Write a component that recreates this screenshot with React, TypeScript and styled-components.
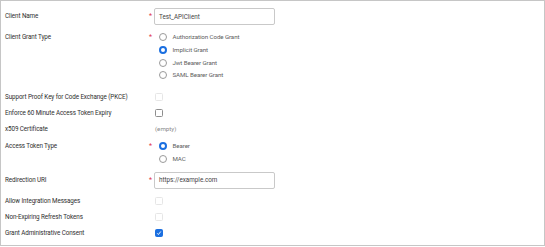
import React from 'react';
import styled, { createGlobalStyle } from 'styled-components';

const Global = createGlobalStyle`
  html, body { margin: 0; padding: 0; background: #fff; }
  body { font-family: Roboto, "Liberation Sans", Arial, sans-serif; }
`;

const Frame = styled.div`
  box-sizing: border-box;
  width: 545px;
  height: 246px;
  border: 1px solid #c6c6c6;
  background: #fff;
  padding: 7px 0 0 4px;
  display: flex;
  flex-direction: column;
`;

const Row = styled.div<{ $h: number; $mt?: number }>`
  display: grid;
  grid-template-columns: 144px 5px 1fr;
  align-items: start;
  min-height: ${p => p.$h}px;
  margin-top: ${p => p.$mt ?? 0}px;
`;

const Label = styled.div<{ $line: number }>`
  font-size: 6.3px;
  font-weight: 400;
  letter-spacing: -0.1px;
  color: #2e2e2e;
  line-height: ${p => p.$line}px;
  white-space: nowrap;
`;

const Req = styled.span<{ $line: number }>`
  color: #e0364b;
  font-size: 7px;
  line-height: ${p => p.$line}px;
  text-align: left;
`;

const TextInput = styled.div`
  box-sizing: border-box;
  width: 121px;
  height: 17px;
  border: 1px solid #c9c9c9;
  border-radius: 2px;
  padding-left: 4px;
  font-size: 6.3px;
  color: #444;
  display: flex;
  align-items: center;
`;

const RadioGroup = styled.div`
  display: flex;
  flex-direction: column;
  padding-left: 5px;
`;

const RadioRow = styled.div`
  display: flex;
  align-items: center;
  height: 12.7px;
  gap: 5.5px;
  font-size: 6.2px;
  letter-spacing: -0.1px;
  color: #5e5e5e;
`;

const Radio = styled.span<{ $on?: boolean }>`
  box-sizing: border-box;
  width: 8px;
  height: 8px;
  border-radius: 50%;
  border: ${p => (p.$on ? '2.3px solid #1b6fe0' : '1px solid #9a9a9a')};
  background: #fff;
  flex: none;
`;

const Box = styled.span<{ $kind: 'off' | 'disabled' | 'on' }>`
  box-sizing: border-box;
  width: 8px;
  height: 8px;
  margin: 4px 0 0 1px;
  border-radius: 1.5px;
  display: flex;
  align-items: center;
  justify-content: center;
  border: 1px solid
    ${p => (p.$kind === 'on' ? '#1b6fe0' : p.$kind === 'off' ? '#8e8e8e' : '#e6e6e6')};
  background: ${p => (p.$kind === 'on' ? '#1b6fe0' : '#fff')};
`;

const Empty = styled.div`
  font-size: 6.2px;
  color: #8a8a8a;
  line-height: 16px;
  padding-left: 1px;
`;

const Check = () => (
  <svg width="6" height="6" viewBox="0 0 10 10">
    <path d="M2 5.5 L4 7.5 L8 2.5" fill="none" stroke="#fff" strokeWidth="1.6" />
  </svg>
);

const CheckRow = ({ label, kind, mt }: { label: string; kind: 'off' | 'disabled' | 'on'; mt?: number }) => (
  <Row $h={16} $mt={mt}>
    <Label $line={16}>{label}</Label>
    <span />
    <div>
      <Box $kind={kind}>{kind === 'on' && <Check />}</Box>
    </div>
  </Row>
);

export default function App() {
  return (
    <>
      <Global />
      <Frame>
        <Row $h={17}>
          <Label $line={17}>Client Name</Label>
          <Req $line={17}>*</Req>
          <TextInput>Test_APIClient</TextInput>
        </Row>

        <Row $h={51} $mt={6}>
          <Label $line={12.7}>Client Grant Type</Label>
          <Req $line={12.7}>*</Req>
          <RadioGroup>
            <RadioRow><Radio />Authorization Code Grant</RadioRow>
            <RadioRow><Radio $on />Implicit Grant</RadioRow>
            <RadioRow><Radio />Jwt Bearer Grant</RadioRow>
            <RadioRow><Radio />SAML Bearer Grant</RadioRow>
          </RadioGroup>
        </Row>

        <CheckRow label="Support Proof Key for Code Exchange (PKCE)" kind="disabled" mt={7} />
        <CheckRow label="Enforce 60 Minute Access Token Expiry" kind="off" />

        <Row $h={16}>
          <Label $line={16}>x509 Certificate</Label>
          <span />
          <Empty>(empty)</Empty>
        </Row>

        <Row $h={25.4} $mt={3}>
          <Label $line={12.7}>Access Token Type</Label>
          <Req $line={12.7}>*</Req>
          <RadioGroup>
            <RadioRow><Radio $on />Bearer</RadioRow>
            <RadioRow><Radio />MAC</RadioRow>
          </RadioGroup>
        </Row>

        <Row $h={17} $mt={6.6}>
          <Label $line={17}>Redirection URI</Label>
          <Req $line={17}>*</Req>
          <TextInput>https://example.com</TextInput>
        </Row>

        <CheckRow label="Allow Integration Messages" kind="disabled" mt={4} />
        <CheckRow label="Non-Expiring Refresh Tokens" kind="disabled" />
        <CheckRow label="Grant Administrative Consent" kind="on" />
      </Frame>
    </>
  );
}
